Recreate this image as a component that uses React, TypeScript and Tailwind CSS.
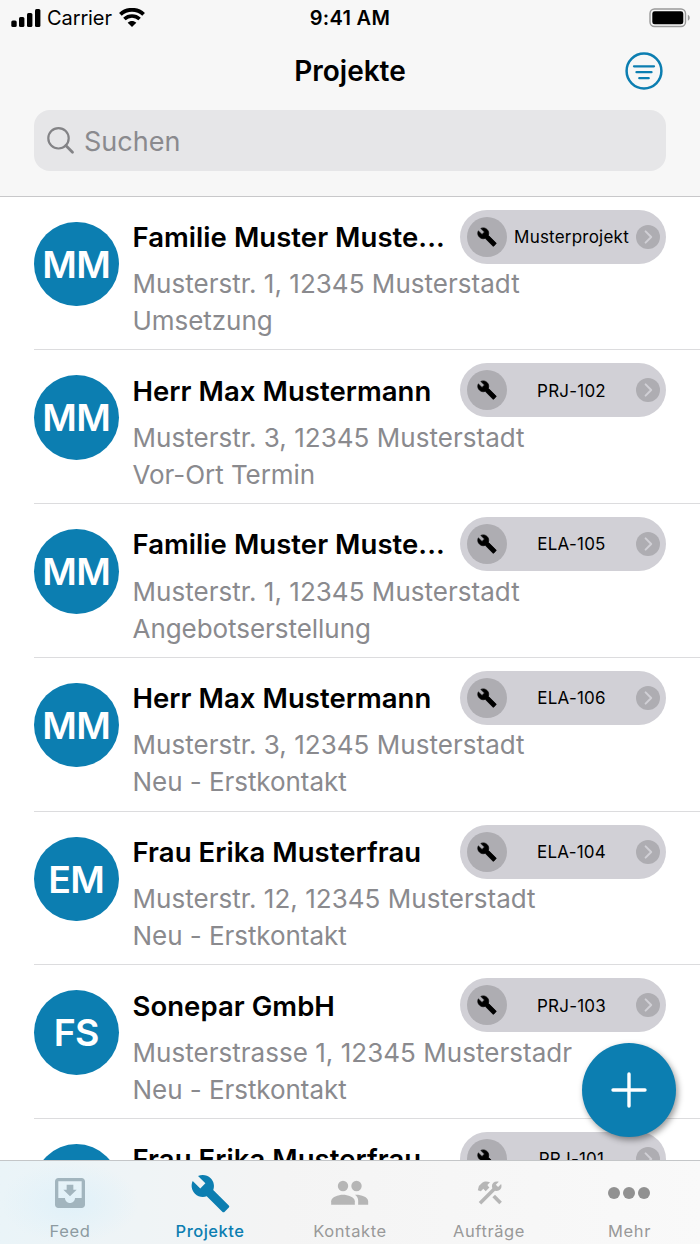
import { MdBuild, MdMoveToInbox } from "react-icons/md";

const projects = [
  { initials: "MM", name: "Familie Muster Muste...", address: "Musterstr. 1, 12345 Musterstadt", status: "Umsetzung", tag: "Musterprojekt" },
  { initials: "MM", name: "Herr Max Mustermann", address: "Musterstr. 3, 12345 Musterstadt", status: "Vor-Ort Termin", tag: "PRJ-102" },
  { initials: "MM", name: "Familie Muster Muste...", address: "Musterstr. 1, 12345 Musterstadt", status: "Angebotserstellung", tag: "ELA-105" },
  { initials: "MM", name: "Herr Max Mustermann", address: "Musterstr. 3, 12345 Musterstadt", status: "Neu - Erstkontakt", tag: "ELA-106" },
  { initials: "EM", name: "Frau Erika Musterfrau", address: "Musterstr. 12, 12345 Musterstadt", status: "Neu - Erstkontakt", tag: "ELA-104" },
  { initials: "FS", name: "Sonepar GmbH", address: "Musterstrasse 1, 12345 Musterstadr", status: "Neu - Erstkontakt", tag: "PRJ-103" },
  { initials: "EM", name: "Frau Erika Musterfrau", address: "Musterstr. 12, 12345 Musterstadt", status: "Neu - Erstkontakt", tag: "PRJ-101" },
];

type Project = (typeof projects)[number];

function StatusBar() {
  return (
    <div className="grid h-[35px] grid-cols-3 items-center pl-[11px] pr-[9px]">
      <div className="flex items-center">
        <svg width="30" height="18" viewBox="0 0 30 18">
          <rect x="0.3" y="11.5" width="5.4" height="6.5" rx="1.5" />
          <rect x="8" y="8" width="5.4" height="10" rx="1.5" />
          <rect x="16" y="4" width="5.4" height="14" rx="1.5" />
          <rect x="24" y="0" width="5.4" height="18" rx="1.5" />
        </svg>
        <span className="ml-[6px] text-[20px] tracking-[-0.1px]">Carrier</span>
        <svg className="ml-[7px]" width="26" height="19" viewBox="0 0 26 19">
          <path d="M1.4 6.4C7.8.2 18.2.2 24.6 6.4" fill="none" stroke="#000" strokeWidth="3.8" />
          <path d="M5.4 11c4.4-4 10.8-4 15.2 0" fill="none" stroke="#000" strokeWidth="3.6" />
          <path d="M8.7 14.7c2.4-2.2 6.2-2.2 8.6 0L13 19z" />
        </svg>
      </div>
      <div className="pr-[2px] text-center text-[20px] font-semibold tracking-[0.3px]">9:41 AM</div>
      <div className="flex justify-end">
        <svg width="42" height="20" viewBox="0 0 42 20">
          <rect x="1" y="1" width="35.5" height="17.5" rx="4.5" fill="none" stroke="#9a9a9a" strokeWidth="1.4" />
          <rect x="3.3" y="3.3" width="31" height="13" rx="2.4" />
          <path d="M38.8 6.8c2.6 1 2.6 5 0 6z" fill="#9a9a9a" />
        </svg>
      </div>
    </div>
  );
}

function Header() {
  return (
    <header className="h-[197px] shrink-0 border-b border-[#c8c8ca] bg-[#f7f7f7]">
      <StatusBar />
      <div className="grid h-[75px] grid-cols-3 items-center pb-[3px] pl-[37px] pr-[37px]">
        <div />
        <h1 className="text-center text-[28px] font-semibold">Projekte</h1>
        <svg className="justify-self-end" width="38" height="38" viewBox="0 0 38 38" fill="none" stroke="#0c7eb1" strokeLinecap="round">
          <circle cx="19" cy="19" r="17.4" strokeWidth="2.5" />
          <path d="M9 14.3h20M11.5 20.2h15M14.3 26.2h9.4" strokeWidth="2.3" />
        </svg>
      </div>
      <div className="mx-[34px] flex h-[61px] items-center rounded-[16px] bg-[#e6e6e8] pl-[13px]">
        <svg width="28" height="28" viewBox="0 0 28 28" fill="none" stroke="#838386" strokeLinecap="round">
          <circle cx="11.5" cy="11.3" r="10.2" strokeWidth="2.2" />
          <path d="M18.8 18.6l6.7 6.7" strokeWidth="2.8" />
        </svg>
        <span className="ml-[9px] mt-[3px] text-[27px] text-[#8a8a8e]">Suchen</span>
      </div>
    </header>
  );
}

function WrenchIcon() {
  return (
    <svg width="20" height="20" viewBox="0 0 24 24" stroke="#000" strokeWidth="0.9" strokeLinejoin="round">
      <path d="M22.7 19l-9.1-9.1c.9-2.3.4-5-1.5-6.9-2-2-5-2.4-7.4-1.3L9 6 6 9 1.6 4.7C.4 7.1.9 10.1 2.9 12.1c1.9 1.9 4.6 2.4 6.9 1.5l9.1 9.1c.4.4 1 .4 1.4 0l2.3-2.3c.5-.4.5-1.1.1-1.4z" />
    </svg>
  );
}

function Tag({ label }: { label: string }) {
  return (
    <div className="flex h-[54px] w-[206px] shrink-0 items-center rounded-full bg-[#d1d0d6] pl-[7px] pr-[6px]">
      <div className="flex size-10 items-center justify-center rounded-full bg-[#aeadb2]">
        <WrenchIcon />
      </div>
      <span className="mt-[2px] flex-1 text-center text-[17px] tracking-[0.22px]">{label}</span>
      <svg width="24" height="24" viewBox="0 0 24 24">
        <circle cx="12" cy="12" r="12" fill="#aeadb2" />
        <path d="M9.6 6.4l5.6 5.6-5.6 5.6" fill="none" stroke="#d1d0d6" strokeWidth="2" strokeLinecap="round" strokeLinejoin="round" />
      </svg>
    </div>
  );
}

function ProjectRow({ project }: { project: Project }) {
  return (
    <li className="ml-[34px] flex h-[153.75px] shrink-0 border-b border-[#dcdcde]">
      <div className="mt-[25px] flex size-[84.5px] shrink-0 items-center justify-center rounded-full bg-[#0c7eb1] pt-[2px] text-[37.5px] font-semibold tracking-[-0.6px] text-white">
        {project.initials}
      </div>
      <div className="ml-[14px] min-w-0 flex-1">
        <div className="mt-[13px] flex h-[54px] items-center justify-between pr-[34px]">
          <h2 className="mt-[2px] whitespace-nowrap text-[27.5px] font-semibold tracking-[0.05px]">{project.name}</h2>
          <Tag label={project.tag} />
        </div>
        <p className="mt-[1.5px] text-[26px] leading-[37px] tracking-[0.03px] text-[#8a8a8e]">{project.address}</p>
        <p className="text-[26px] leading-[37px] tracking-[-0.05px] text-[#8a8a8e]">{project.status}</p>
      </div>
    </li>
  );
}

function PeopleIcon() {
  return (
    <svg width="40" height="40" viewBox="0 0 24 24" fill="#b6b6b6">
      <circle cx="7.8" cy="7.8" r="3.1" />
      <circle cx="15.9" cy="7.8" r="3.1" />
      <path d="M.7 19.1v-2.2c0-2.6 4.4-3.9 7.1-3.9s7.1 1.3 7.1 3.9v2.2z" />
      <path d="M15 13.1c3.2-.2 7.9 1.2 7.9 3.8v2.2h-6v-2.4c0-1.4-.6-2.6-1.9-3.6z" />
    </svg>
  );
}

// hammer and wrench, crossed
function ToolsIcon() {
  return (
    <svg width="26" height="26" viewBox="0 0 26 26" fill="#b6b6b6">
      <path d="M3 23.2L17 9.2" stroke="#b6b6b6" strokeWidth="3.5" />
      <path d="M19.8 1.4c.8 0 1.4.1 2 .4l-3 3 2.3 2.3 3-3c.3.6.4 1.2.4 1.9a4.8 4.8 0 1 1-4.7-4.6z" />
      <path d="M.8 10.2L1.9 6l3.3-3.2c2-1.8 5-1.8 7.8-.5l-2.6 2.6 1 1.5 1 1-3.7 3.8-2.4-2.5-2.5 2.6z" />
      <path d="M16.7 16l6.9 7" stroke="#b6b6b6" strokeWidth="3.7" />
    </svg>
  );
}

function TabBar() {
  return (
    <nav className="grid h-[84px] shrink-0 grid-cols-5 border-t border-[#c4c6c8] bg-linear-to-r from-[#eaf4f8] from-0% via-[#f4f4f4] via-40% to-[#f9f9f9] text-[16.5px] tracking-[0.6px] text-[#999]">
      <div className="flex flex-col items-center bg-radial from-[#e0f1f9] to-transparent to-70% text-[#8d9ba1]">
        <div className="flex h-[64px] items-center"><MdMoveToInbox className="size-10 text-[#a2b5be]" /></div>
        <span className="-mt-[6px]">Feed</span>
      </div>
      <div className="flex flex-col items-center font-medium text-[#0c7eb1]">
        <div className="flex h-[64px] items-center"><MdBuild className="size-[41px]" /></div>
        <span className="-mt-[6px] tracking-[0.5px]">Projekte</span>
      </div>
      <div className="flex flex-col items-center">
        <div className="flex h-[64px] items-center"><PeopleIcon /></div>
        <span className="-mt-[6px]">Kontakte</span>
      </div>
      <div className="flex flex-col items-center">
        <div className="flex h-[64px] items-center"><ToolsIcon /></div>
        <span className="-mt-[6px] pr-[2px]">Aufträge</span>
      </div>
      <div className="flex flex-col items-center">
        <div className="flex h-[64px] items-center gap-[3px] pr-[2px]">
          <div className="size-[12px] rounded-full bg-[#919191]" />
          <div className="size-[12px] rounded-full bg-[#919191]" />
          <div className="size-[12px] rounded-full bg-[#919191]" />
        </div>
        <span className="-mt-[6px] pr-px">Mehr</span>
      </div>
    </nav>
  );
}

export default function App() {
  return (
    <main className="relative flex h-[1244px] w-[700px] flex-col overflow-hidden bg-white font-['Inter',sans-serif] text-black">
      <Header />
      <ul className="-mt-[0.5px] flex min-h-0 flex-1 flex-col overflow-hidden">
        {projects.map((project, i) => (
          <ProjectRow key={i} project={project} />
        ))}
      </ul>
      <TabBar />
      <button className="absolute bottom-[107px] right-[24px] flex size-[94px] items-center justify-center rounded-full bg-[#0c7eb1] shadow-[2px_3px_6px_rgba(0,0,0,0.4)]">
        <svg width="36" height="36" viewBox="0 0 36 36" stroke="#fff" strokeWidth="3.4" strokeLinecap="round">
          <path d="M18 2v32M2 18h32" />
        </svg>
      </button>
    </main>
  );
}
